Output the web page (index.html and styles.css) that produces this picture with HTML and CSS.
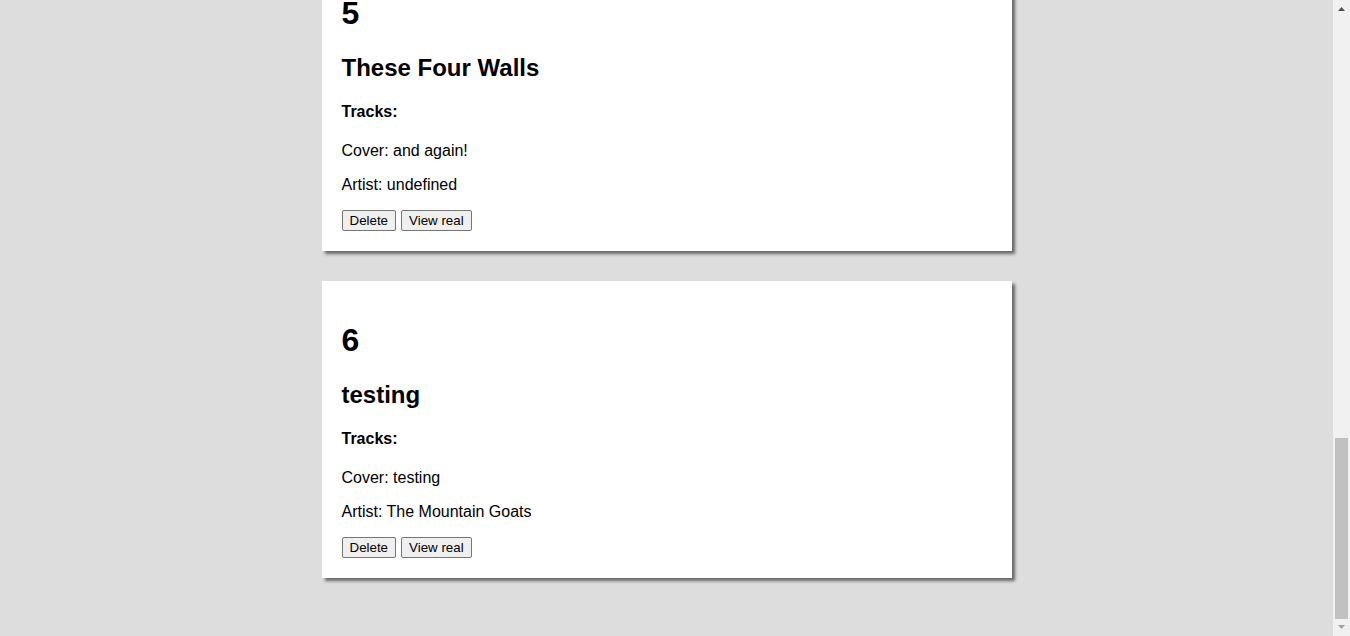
FILE: index.html
```html
<!DOCTYPE html>
<html lang="en">
<head>
<meta charset="utf-8">
<title>Albums</title>
<link rel="stylesheet" href="styles.css">
</head>
<body>
<main class="album-list">
  <section class="album-card">
    <h1 class="album-id">1</h1>
    <h2 class="album-title">Tallahassee</h2>
    <h4 class="album-tracks">Tracks:</h4>
    <p class="album-line">Cover: tallahassee</p>
    <p class="album-line">Artist: The Mountain Goats</p>
    <div class="album-actions"><button class="btn">Delete</button><button class="btn">View real</button></div>
  </section>
  <section class="album-card">
    <h1 class="album-id">2</h1>
    <h2 class="album-title">The Sunset Tree</h2>
    <h4 class="album-tracks">Tracks:</h4>
    <p class="album-line">Cover: sunset</p>
    <p class="album-line">Artist: The Mountain Goats</p>
    <div class="album-actions"><button class="btn">Delete</button><button class="btn">View real</button></div>
  </section>
  <section class="album-card">
    <h1 class="album-id">3</h1>
    <h2 class="album-title">Get Lonely</h2>
    <h4 class="album-tracks">Tracks:</h4>
    <p class="album-line">Cover: lonely</p>
    <p class="album-line">Artist: The Mountain Goats</p>
    <div class="album-actions"><button class="btn">Delete</button><button class="btn">View real</button></div>
  </section>
  <section class="album-card">
    <h1 class="album-id">4</h1>
    <h2 class="album-title">Heretic Pride</h2>
    <h4 class="album-tracks">Tracks:</h4>
    <p class="album-line">Cover: again</p>
    <p class="album-line">Artist: undefined</p>
    <div class="album-actions"><button class="btn">Delete</button><button class="btn">View real</button></div>
  </section>
  <section class="album-card">
    <h1 class="album-id">5</h1>
    <h2 class="album-title">These Four Walls</h2>
    <h4 class="album-tracks">Tracks:</h4>
    <p class="album-line">Cover: and again!</p>
    <p class="album-line">Artist: undefined</p>
    <div class="album-actions"><button class="btn">Delete</button><button class="btn">View real</button></div>
  </section>
  <section class="album-card">
    <h1 class="album-id">6</h1>
    <h2 class="album-title">testing</h2>
    <h4 class="album-tracks">Tracks:</h4>
    <p class="album-line">Cover: testing</p>
    <p class="album-line">Artist: The Mountain Goats</p>
    <div class="album-actions"><button class="btn">Delete</button><button class="btn">View real</button></div>
  </section>
</main>
<div class="scrollbar" aria-hidden="true">
  <div class="sb-btn">
    <svg width="17" height="17" viewBox="0 0 17 17"><polygon points="5,11 12,11 8.5,7" fill="#505050"/></svg>
  </div>
  <div class="sb-track"><div class="sb-thumb"></div></div>
  <div class="sb-btn">
    <svg width="17" height="17" viewBox="0 0 17 17"><polygon points="5,6 12,6 8.5,10" fill="#a3a3a3"/></svg>
  </div>
</div>
<script>
window.scrollTo(0, document.documentElement.scrollHeight);
</script>
</body>
</html>
```

FILE: styles.css
```css
html {
  overflow: hidden;
  background: #dddddd;
}

body {
  margin: 8px 25px 8px 8px;
  font-family: "Liberation Sans", Arial, sans-serif;
  color: #000;
}

.album-list {
  padding: 20px;
}

.album-card {
  width: 650px;
  margin: 0 auto 30px;
  padding: 20px;
  background: #fff;
  box-shadow: 3px 3px 3px #666;
}

.album-id {
  font-size: 32px;
  margin: 21.44px 0;
}

.album-title {
  font-size: 24px;
  margin: 19.92px 0;
}

.album-tracks {
  font-size: 16px;
  margin: 21.28px 0;
}

.album-line {
  font-size: 16px;
  margin: 16px 0;
}

.album-actions {
  display: flex;
  gap: 5px;
}

.btn {
  font-family: "Liberation Sans", Arial, sans-serif;
  font-size: 13.333px;
  line-height: 15px;
  color: #000;
  background: #efefef;
  border: 1px solid #767676;
  border-radius: 2px;
  padding: 2px 7px;
  margin: 0;
}

.scrollbar {
  position: fixed;
  top: 0;
  right: 0;
  width: 17px;
  height: 100%;
  background: #f1f1f1;
  display: flex;
  flex-direction: column;
}

.sb-btn {
  height: 17px;
  flex: none;
}

.sb-btn svg {
  display: block;
}

.sb-track {
  flex: 1;
  display: flex;
  flex-direction: column;
}

.sb-thumb {
  margin: auto 2px 0;
  height: 181px;
  background: #c1c1c1;
}
```
